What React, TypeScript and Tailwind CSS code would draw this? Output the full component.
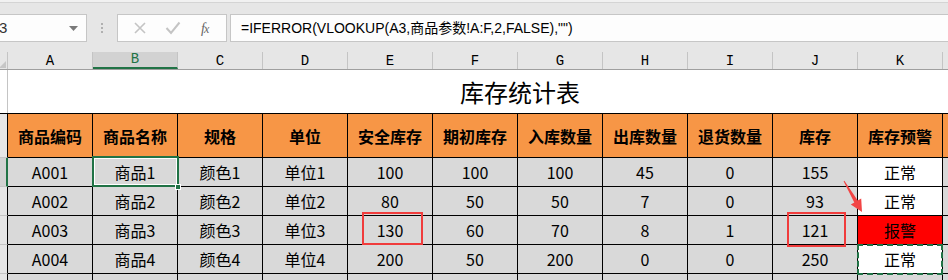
import React from "react";

const cols = ["A", "B", "C", "D", "E", "F", "G", "H", "I", "J", "K"];
const heads = ["商品编码", "商品名称", "规格", "单位", "安全库存", "期初库存", "入库数量", "出库数量", "退货数量", "库存", "库存预警"];
const rows = [
  ["A001", "商品1", "颜色1", "单位1", "100", "100", "100", "45", "0", "155", "正常"],
  ["A002", "商品2", "颜色2", "单位2", "80", "50", "50", "7", "0", "93", "正常"],
  ["A003", "商品3", "颜色3", "单位3", "130", "60", "70", "8", "1", "121", "报警"],
  ["A004", "商品4", "颜色4", "单位4", "200", "50", "200", "0", "0", "250", "正常"],
];

const grid = "grid grid-cols-[8px_repeat(11,85px)_1fr]";

function FormulaBar() {
  return (
    <div className="h-[52px] bg-[#e6e6e6] relative">
      <div className="h-[3px] bg-[#f1f1f1] border-b border-[#d4d4d4]" />
      <div className="absolute top-[14px] left-0 right-0 h-[28px] flex items-stretch">
        <div className="w-[87px] bg-[#fdfdfd] border border-l-0 border-[#c6c6c6] flex items-center justify-between pr-[8px]">
          <span className="text-[15px] text-[#333] font-['Liberation_Sans',sans-serif] -ml-[1px]">3</span>
          <svg width="9" height="5" viewBox="0 0 9 5">
            <path d="M0 0h9L4.5 5z" fill="#7a7a7a" />
          </svg>
        </div>
        <div className="w-[30px] flex flex-col items-center justify-center gap-[2px]">
          <span className="w-[2px] h-[2px] bg-[#b0b0b0]" />
          <span className="w-[2px] h-[2px] bg-[#b0b0b0]" />
          <span className="w-[2px] h-[2px] bg-[#b0b0b0]" />
        </div>
        <div className="w-[110px] bg-[#fdfdfd] border border-[#c6c6c6] flex items-center">
          <svg width="14" height="14" viewBox="0 0 14 14" className="ml-[15px]">
            <path d="M2 2l10 10M12 2L2 12" stroke="#c4c4c4" strokeWidth="1.6" />
          </svg>
          <svg width="16" height="14" viewBox="0 0 16 14" className="ml-[18px]">
            <path d="M1.5 7l4.5 5L14.5 1.5" stroke="#c4c4c4" strokeWidth="2" fill="none" />
          </svg>
          <span className="ml-[20px] italic text-[14px] text-[#666] font-['Liberation_Serif',serif] tracking-[-1px]">
            f<span className="text-[12px]">x</span>
          </span>
        </div>
        <div className="ml-[3px] flex-1 bg-[#fdfdfd] border border-r-0 border-[#c6c6c6] flex items-center pl-[10px]">
          <span className="text-[14px] text-black font-['Liberation_Sans','Noto_Sans_CJK_SC',sans-serif]">
            =IFERROR(VLOOKUP(A3,商品参数!A:F,2,FALSE),"")
          </span>
        </div>
      </div>
    </div>
  );
}

function ColumnHeaders() {
  return (
    <div className={`${grid} h-[18px] bg-[#e6e6e6] border-b border-[#9f9f9f]`}>
      <div className="border-r border-[#c4c4c4] relative">
        <svg width="7" height="7" viewBox="0 0 7 7" className="absolute right-[1px] bottom-[1px]">
          <path d="M7 0v7H0z" fill="#c6c6c6" />
        </svg>
      </div>
      {cols.map((c) => (
        <div
          key={c}
          className={`border-r border-[#c4c4c4] flex items-end justify-center pb-[1px] text-[14px] leading-none font-['Liberation_Mono',monospace] ${
            c === "B" ? "bg-[#d2d2d2] text-[#217346] border-b-2 border-b-[#217346]" : "text-black"
          }`}
        >
          {c}
        </div>
      ))}
      <div />
    </div>
  );
}

export default function App() {
  return (
    <div className="w-[948px] h-[280px] overflow-hidden bg-white relative font-['Noto_Sans_CJK_SC',sans-serif]">
      <FormulaBar />
      <ColumnHeaders />

      {/* title row */}
      <div className={`${grid} h-[44px] border-b border-black`}>
        <div className="bg-white border-r border-[#c4c4c4]" />
        <div className="col-span-12 flex items-center pl-[452px] text-[24px] text-black leading-none pt-[1px]">
          库存统计表
        </div>
      </div>

      {/* header row */}
      <div className={`${grid} h-[44px]`}>
        <div className="bg-[#e6e6e6] border-r border-black border-b border-b-[#c4c4c4]" />
        {heads.map((h) => (
          <div
            key={h}
            className="bg-[#f79646] border-r border-b border-black flex items-center justify-center text-[16px] font-bold text-black"
          >
            {h}
          </div>
        ))}
        <div className="bg-[#f79646] border-b border-black" />
      </div>

      {/* data rows */}
      {rows.map((r, i) => (
        <div key={r[0]} className={`${grid} h-[29px]`}>
          <div
            className={`border-b border-[#c4c4c4] ${
              i === 0 ? "bg-[#d2d2d2] border-r-2 border-r-[#217346]" : "bg-[#e6e6e6] border-r border-r-black"
            }`}
          />
          {r.map((v, j) => (
            <div
              key={j}
              className={`border-r border-b border-black flex items-center justify-center text-[16px] text-black ${
                j === 10 ? (v === "报警" ? "bg-[#ff0000]" : "bg-white") : "bg-[#d9d9d9]"
              }`}
            >
              {v}
            </div>
          ))}
          <div className="bg-[#d9d9d9] border-b border-black" />
        </div>
      ))}
      <div className={`${grid} h-[10px]`}>
        <div className="bg-[#e6e6e6] border-r border-black" />
        {cols.map((c) => (
          <div key={c} className="bg-[#d9d9d9] border-r border-black" />
        ))}
        <div className="bg-[#d9d9d9]" />
      </div>

      {/* selected cell B (row A001) */}
      <div className="absolute left-[92px] top-[156px] w-[87px] h-[31px] border-2 border-[#217346]">
        <div className="w-full h-full border border-white" />
      </div>
      <div className="absolute left-[175px] top-[184px] w-[6px] h-[6px] bg-[#217346] border border-white" />

      {/* copy marquee K (row A004) */}
      <div className="absolute left-[857px] top-[244px] w-[86px] h-[31px] border-2 border-dashed border-[#217346]" />

      {/* red annotation boxes */}
      <div className="absolute left-[362px] top-[212px] w-[61px] h-[33px] border-[2px] border-[#f03c3c]" />
      <div className="absolute left-[787px] top-[212px] w-[59px] h-[35px] border-[2px] border-[#f03c3c]" />

      {/* arrow */}
      <svg className="absolute left-[838px] top-[176px]" width="30" height="40" viewBox="0 0 30 40">
        <path d="M5.6 5.2L6.4 4.8L19.7 24.6L23.2 22.6L24 36L12.8 28.6L16.3 26.6z" fill="#f24545" />
      </svg>
    </div>
  );
}
